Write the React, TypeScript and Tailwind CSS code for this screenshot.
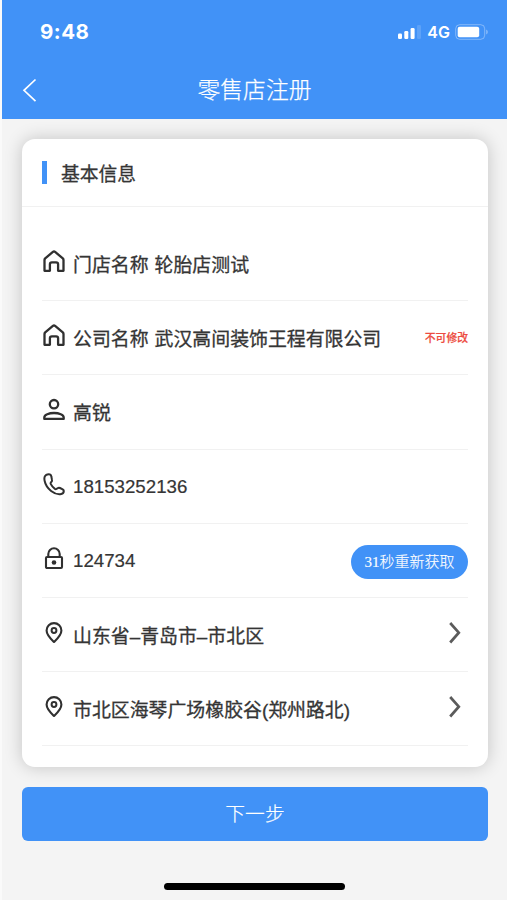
import type { ReactNode } from 'react';

const Home = () => (
  <svg viewBox="0 0 24 24" className="h-6 w-6" fill="none" stroke="#303030" strokeWidth="2.3" strokeLinejoin="round" strokeLinecap="round">
    <path d="M2.500 11q0-.9.700-1.600L10.900 2.900q1.100-.9 2.200 0l7.700 6.500q.7.700.7 1.600v10.800h-5.400v-6.500a2 2 0 0 0-2-2h-4.200a2 2 0 0 0-2 2v6.500H2.500z" />
  </svg>
);

const Person = () => (
  <svg viewBox="0 0 24 24" className="h-6 w-6" fill="none" stroke="#303030" strokeWidth="2.300" strokeLinejoin="round">
    <circle cx="12" cy="7.200" r="4.200" />
    <path d="M2.300 21.900v-1.500c0-2.700 4.600-4.400 9.700-4.400s9.700 1.700 9.700 4.400v1.500z" />
  </svg>
);

const Phone = () => (
  <svg viewBox="0 0 24 24" className="h-6 w-6" fill="none" stroke="#303030" strokeWidth="2" strokeLinejoin="round">
    <path d="M4.300 2.800C2.500 3.900 2 6 2.600 8.800c.8 3.900 3.200 7.600 6.500 10.200 2.900 2.300 6.300 3.500 9.200 3.200 2-.2 3.500-1.500 3.500-3.200 0-.8-.4-1.300-1.100-1.700l-2.700-1.300c-.8-.4-1.500-.4-2.200.1l-1.400.9c-.5.3-1 .2-1.500-.1-1.800-1.300-3.200-3-4.200-5-.3-.6-.2-1.100.2-1.500l.6-.6c.5-.5.7-1.100.5-1.900l-.7-3.600c-.2-1.300-1.200-2.100-2.600-2.100-.9 0-1.600.1-2.400.6z" />
  </svg>
);

const Lock = () => (
  <svg viewBox="0 0 24 24" className="h-6 w-6" fill="none" stroke="#303030" strokeWidth="2.100" strokeLinejoin="round">
    <rect x="4" y="11" width="16" height="11" rx="1" />
    <path d="M6.300 11V8a5.700 5.700 0 0 1 11.400 0v3" />
    <circle cx="12" cy="16.500" r="2.300" fill="#303030" stroke="none" />
  </svg>
);

const Pin = () => (
  <svg viewBox="0 0 24 24" className="h-6 w-6" fill="none" stroke="#303030" strokeWidth="2.100" strokeLinejoin="round">
    <path d="M12 22c-2.600-2.600-7.400-6.800-7.400-11.500a7.400 7.400 0 0 1 14.800 0c0 4.700-4.800 8.900-7.400 11.500z" />
    <circle cx="12" cy="10.500" r="2.400" strokeWidth="2" />
  </svg>
);

const Chevron = () => (
  <svg viewBox="0 0 14 24" className="-mt-[4px] mr-[6px] h-6 w-[14px]" fill="none" stroke="#5b5b5b" strokeWidth="2.700">
    <path d="M2.200 2l8.600 9.700-8.600 9.800" />
  </svg>
);

function Row({ icon, label, value, action }: { icon: ReactNode; label?: string; value: string; action?: ReactNode }) {
  const numeric = /^\d+$/.test(value);
  return (
    <div className="flex h-[74.200px] items-center border-b border-[#f1f1f1]">
      <div className="mr-[7px] -mt-[5px] shrink-0">{icon}</div>
      <div
        className={
          numeric
            ? 'mt-px grow text-[18.700px] leading-6 text-[#353535] [-webkit-text-stroke:0.2px_#353535]'
            : 'mt-[5px] flex grow items-center gap-[6px] whitespace-nowrap text-[18.900px] leading-6 text-[#353535] [-webkit-text-stroke:0.3px_#353535]'
        }
      >
        {label && <span className="-mt-px">{label}</span>}
        <span>{value}</span>
      </div>
      {action}
    </div>
  );
}

export default function App() {
  return (
    <div className="h-[900px] w-[507px] overflow-hidden bg-[#f4f4f4] pl-[2px] shadow-[inset_2px_0_0_#fafafa] font-['Liberation_Sans','Noto_Sans_CJK_SC',sans-serif]">
      <header className="h-[119px] bg-[#4192f7] text-white">
        <div className="flex h-[62px] items-center justify-between pr-[18px] pl-[38px]">
          <span className="mt-[2px] font-[Inter,sans-serif] text-[20.500px] leading-6 font-bold tracking-[0.5px]">9:48</span>
          <div className="mt-[2px] flex items-center">
            <svg viewBox="0 0 24 16" className="mr-px h-4 w-6" fill="#fff">
              <rect x="1" y="9.500" width="4" height="5.500" rx="1.200" />
              <rect x="7.300" y="7" width="4" height="8" rx="1.200" />
              <rect x="13.600" y="4" width="4" height="11" rx="1.200" />
              <rect x="20" y="1" width="4" height="14" rx="1.200" opacity=".15" />
            </svg>
            <span className="ml-[5px] font-[Inter,sans-serif] text-[16px] leading-5 font-semibold">4G</span>
            <svg viewBox="0 0 34 16" className="-mt-px ml-[5px] h-4 w-[34px]">
              <rect x=".7" y=".7" width="29" height="14.600" rx="4" fill="none" stroke="#fff" strokeOpacity=".35" />
              <rect x="2.700" y="2.800" width="21.500" height="10.400" rx="2" fill="#fff" />
              <path d="M31.300 5.500v5c1.800-.8 1.800-4.200 0-5z" fill="#fff" opacity=".45" />
            </svg>
          </div>
        </div>
        <div className="grid h-[55px] grid-cols-[60px_1fr_60px] items-center">
          <svg viewBox="0 0 16 24" className="ml-5 h-6 w-4" fill="none" stroke="#fff" strokeWidth="1.700">
            <path d="M13.500 1.500 2 12.300l11.500 10.800" />
          </svg>
          <h1 className="text-center text-[22.800px] leading-8 font-light [-webkit-text-stroke:0.25px_white]">零售店注册</h1>
        </div>
      </header>

      <section className="mt-5 mr-[19px] ml-5 h-[628px] rounded-[13px] bg-white shadow-[0_0_18px_rgba(0,0,0,0.2)]">
        <div className="flex h-[68px] items-center border-b border-[#f1f1f1] pl-5">
          <span className="h-[23px] w-[5px] bg-[#4192f7]" />
          <h2 className="mt-[4px] ml-[14px] text-[18.800px] leading-6 text-[#353535] [-webkit-text-stroke:0.3px_#353535]">基本信息</h2>
        </div>
        <div className="px-5 pt-[20px]">
          <Row icon={<Home />} label="门店名称" value="轮胎店测试" />
          <Row
            icon={<Home />}
            label="公司名称"
            value="武汉高间装饰王程有限公司"
            action={<span className="text-[10.800px] leading-4 font-medium text-[#ed4b40] [-webkit-text-stroke:0.2px_#ed4b40]">不可修改</span>}
          />
          <Row icon={<Person />} value="高锐" />
          <Row icon={<Phone />} value="18153252136" />
          <Row
            icon={<Lock />}
            value="124734"
            action={
              <button className="mt-[3px] h-[34px] w-[117px] shrink-0 rounded-full bg-[#4192f7] font-['Liberation_Serif','Noto_Sans_CJK_SC',serif] text-[15px] leading-5 font-light text-white [-webkit-text-stroke:0.15px_white]">
                31秒重新获取
              </button>
            }
          />
          <Row icon={<Pin />} value="山东省–青岛市–市北区" action={<Chevron />} />
          <Row icon={<Pin />} value="市北区海琴广场橡胶谷(郑州路北)" action={<Chevron />} />
        </div>
      </section>

      <button className="mt-5 ml-5 h-[54px] w-[466px] rounded-[6px] bg-[#4192f7] pt-[2px] text-[19.800px] font-light text-white [-webkit-text-stroke:0.2px_white]">下一步</button>
      <div className="mt-[42px] ml-[162px] h-[7px] w-[181px] rounded-full bg-black" />
    </div>
  );
}
